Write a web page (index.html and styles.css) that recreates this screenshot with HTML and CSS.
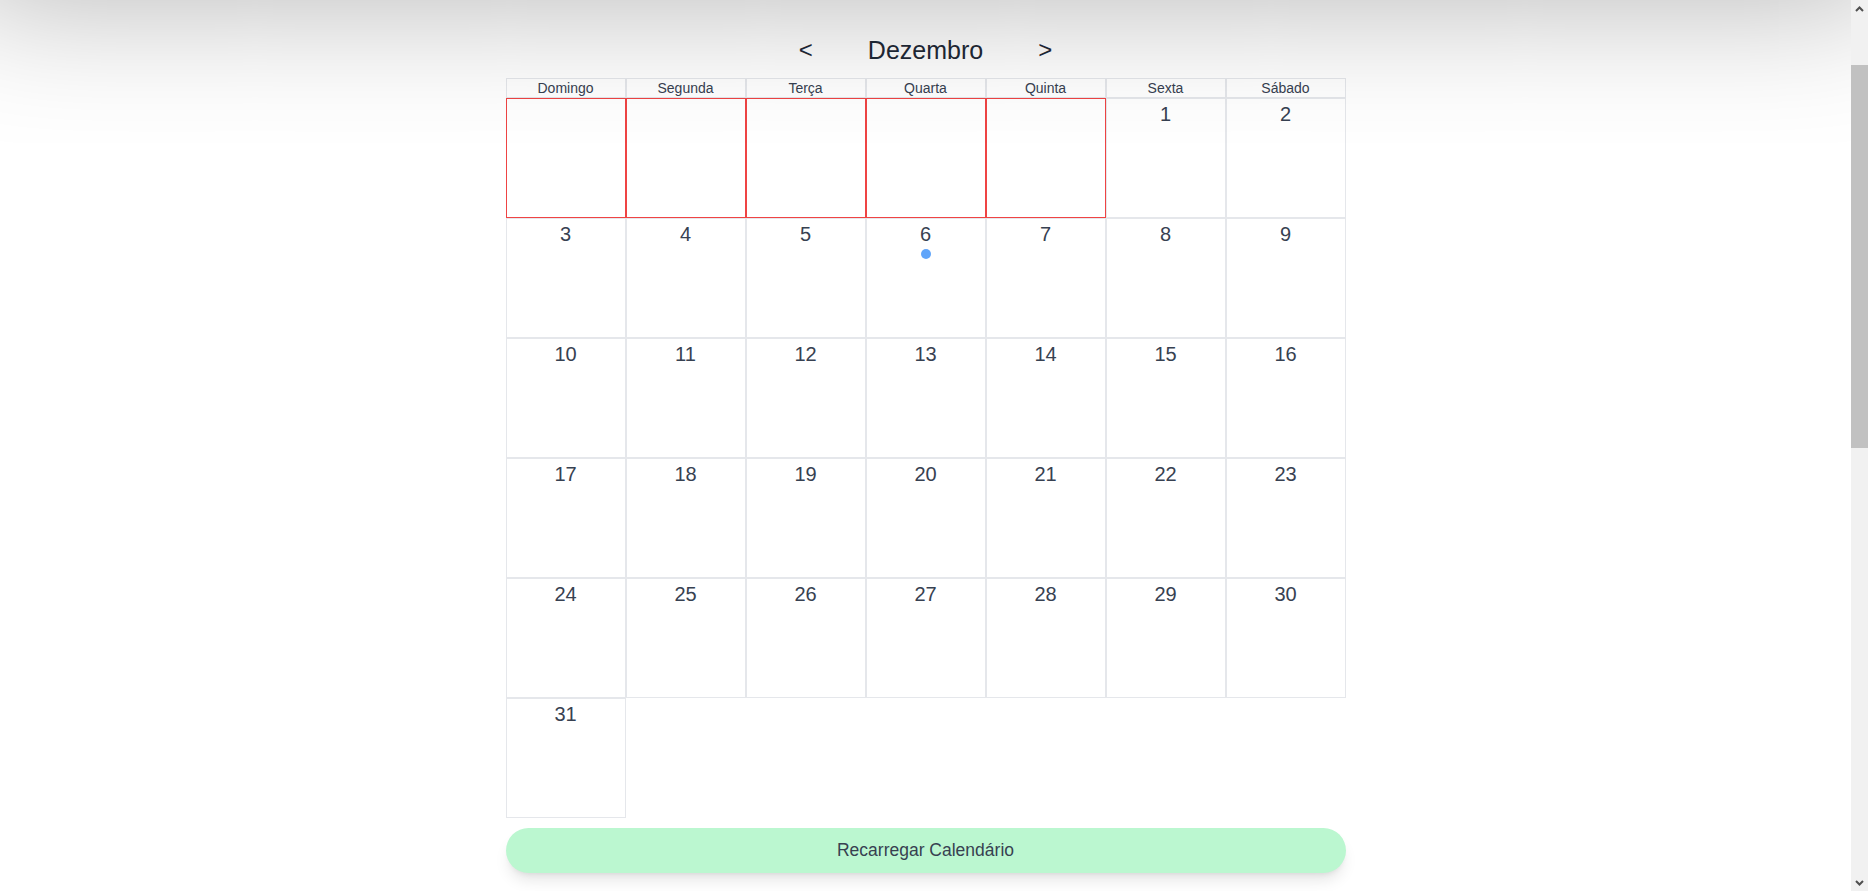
FILE: index.html
```html
<!DOCTYPE html>
<html lang="pt-BR">
<head>
<meta charset="utf-8">
<title>Calendário</title>
<link rel="stylesheet" href="styles.css">
</head>
<body>
<header class="topbar"></header>
<main class="page">
  <section class="calendar">
    <div class="month-nav">
      <button class="nav-btn" type="button">&lt;</button>
      <h2 class="month-title">Dezembro</h2>
      <button class="nav-btn" type="button">&gt;</button>
    </div>
    <div class="grid">
      <div class="weekday">Domingo</div>
      <div class="weekday">Segunda</div>
      <div class="weekday">Terça</div>
      <div class="weekday">Quarta</div>
      <div class="weekday">Quinta</div>
      <div class="weekday">Sexta</div>
      <div class="weekday">Sábado</div>

      <div class="day day-empty"></div>
      <div class="day day-empty"></div>
      <div class="day day-empty"></div>
      <div class="day day-empty"></div>
      <div class="day day-empty"></div>
      <div class="day"><span class="num">1</span></div>
      <div class="day"><span class="num">2</span></div>

      <div class="day"><span class="num">3</span></div>
      <div class="day"><span class="num">4</span></div>
      <div class="day"><span class="num">5</span></div>
      <div class="day"><span class="num">6</span><span class="dot"></span></div>
      <div class="day"><span class="num">7</span></div>
      <div class="day"><span class="num">8</span></div>
      <div class="day"><span class="num">9</span></div>

      <div class="day"><span class="num">10</span></div>
      <div class="day"><span class="num">11</span></div>
      <div class="day"><span class="num">12</span></div>
      <div class="day"><span class="num">13</span></div>
      <div class="day"><span class="num">14</span></div>
      <div class="day"><span class="num">15</span></div>
      <div class="day"><span class="num">16</span></div>

      <div class="day"><span class="num">17</span></div>
      <div class="day"><span class="num">18</span></div>
      <div class="day"><span class="num">19</span></div>
      <div class="day"><span class="num">20</span></div>
      <div class="day"><span class="num">21</span></div>
      <div class="day"><span class="num">22</span></div>
      <div class="day"><span class="num">23</span></div>

      <div class="day"><span class="num">24</span></div>
      <div class="day"><span class="num">25</span></div>
      <div class="day"><span class="num">26</span></div>
      <div class="day"><span class="num">27</span></div>
      <div class="day"><span class="num">28</span></div>
      <div class="day"><span class="num">29</span></div>
      <div class="day"><span class="num">30</span></div>

      <div class="day"><span class="num">31</span></div>
    </div>
    <button class="reload-btn" type="button">Recarregar Calendário</button>
  </section>
</main>
<div class="scrollbar" aria-hidden="true">
  <span class="sb-arrow">
    <svg width="9" height="6" viewBox="0 0 9 6"><path d="M1 5 L4.5 1.5 L8 5" fill="none" stroke="#505050" stroke-width="2"/></svg>
  </span>
  <span class="sb-track"><span class="sb-thumb"></span></span>
  <span class="sb-arrow">
    <svg width="9" height="6" viewBox="0 0 9 6"><path d="M1 1 L4.5 4.5 L8 1" fill="none" stroke="#505050" stroke-width="2"/></svg>
  </span>
</div>
<script src="script.js"></script>
</body>
</html>
```
FILE: styles.css
```css
body {
  margin: 0 17px 0 0;
  background: #ffffff;
  font-family: "Liberation Sans", Arial, sans-serif;
  color: #374151;
}

.topbar {
  position: relative;
  z-index: 1;
  height: 112px;
  background: #ffffff;
  box-shadow: 0 -40px 140px 40px rgba(0, 0, 0, 0.3);
}

.page {
  padding: 34px 0 1008px;
  display: flex;
  justify-content: center;
}

.calendar {
  width: 840px;
  display: flex;
  flex-direction: column;
}

.month-nav {
  height: 32px;
  margin-bottom: 12px;
  display: flex;
  justify-content: center;
  align-items: center;
  gap: 55px;
}
.nav-btn {
  border: 0;
  background: none;
  padding: 0;
  font-family: inherit;
  font-size: 24px;
  line-height: 32px;
  color: #1f2937;
  cursor: pointer;
}
.month-title {
  margin: 0;
  font-size: 25px;
  line-height: 32px;
  font-weight: normal;
  color: #1f2937;
}

.grid {
  display: grid;
  grid-template-columns: repeat(7, 120px);
}
.weekday {
  height: 20px;
  box-sizing: border-box;
  border: 1px solid #e5e7eb;
  padding-top: 1px;
  font-size: 14px;
  line-height: 17px;
  text-align: center;
  color: #374151;
}
.day {
  height: 120px;
  box-sizing: border-box;
  border: 1px solid #e5e7eb;
  padding-top: 1px;
  display: flex;
  flex-direction: column;
  align-items: center;
}
.day-empty {
  border-color: #ef4444;
}
.num {
  font-size: 20px;
  line-height: 28px;
  color: #374151;
}
.dot {
  width: 10px;
  height: 10px;
  margin-top: 1px;
  border-radius: 50%;
  background: #60a5fa;
}

.reload-btn {
  margin-top: 10px;
  height: 45px;
  width: 100%;
  border: 0;
  border-radius: 9999px;
  background: #bbf7d0;
  color: #374151;
  font-family: inherit;
  font-size: 17.5px;
  box-shadow: 0 10px 15px -3px rgba(0, 0, 0, 0.1), 0 4px 6px -4px rgba(0, 0, 0, 0.1);
  cursor: pointer;
}

/* decorative classic scrollbar overlay */
.scrollbar {
  position: fixed;
  top: 0;
  right: 0;
  z-index: 5;
  width: 17px;
  height: 100vh;
  background: #f1f1f1;
  display: flex;
  flex-direction: column;
}
.sb-arrow {
  height: 17px;
  flex: none;
  display: flex;
  align-items: center;
  justify-content: center;
}
.sb-track {
  flex: 1;
  display: flex;
  flex-direction: column;
}
.sb-thumb {
  margin-top: 48px;
  height: 383px;
  background: #c1c1c1;
}
```
FILE: script.js
```js
if ('scrollRestoration' in history) {
  history.scrollRestoration = 'manual';
}
window.scrollTo(0, 112);
window.addEventListener('load', function () {
  window.scrollTo(0, 112);
});
```
